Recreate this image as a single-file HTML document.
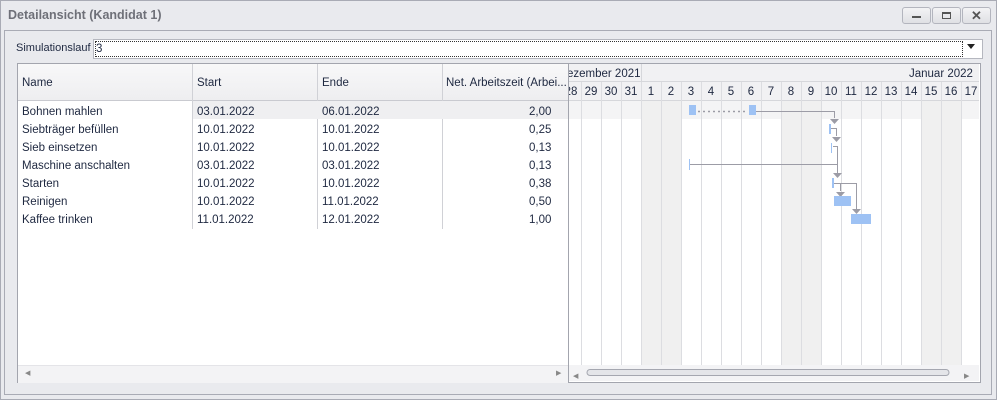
<!DOCTYPE html>
<html><head><meta charset="utf-8"><style>
body{margin:0;width:997px;height:400px;background:#e9eaee;font-family:"Liberation Sans",sans-serif;font-size:11.5px;color:#1e2840;position:relative;overflow:hidden}
.abs{position:absolute}
.win{left:0;top:0;width:995px;height:398px;border:1px solid #a9abb5}
.title{left:8px;top:8px;font-weight:bold;font-size:12.5px;color:#6e7078}
.btn{top:7px;width:27px;height:15px;border:1px solid #b3b5be;border-radius:3px;background:linear-gradient(#f3f3f5,#dfe0e4)}
.panel{left:4px;top:30px;width:986px;height:363px;border:1px solid #a9abb5;background:#e9eaee}
.grid{left:17px;top:63px;width:962px;height:318px;border:1px solid #a3a5ae;background:#fff}
.hdr{background:linear-gradient(#f8f8f9,#eeeef0);border-bottom:1px solid #c9cad0}
.c{position:absolute;white-space:nowrap}
</style></head><body>
<div class="abs win"></div>
<div class="abs title">Detailansicht (Kandidat 1)</div>
<div class="abs btn" style="left:902px"><div class="abs" style="left:9px;top:8px;width:9px;height:2px;background:#555"></div></div>
<div class="abs btn" style="left:932px"><div class="abs" style="left:9px;top:4px;width:7px;height:4px;border:1px solid #555;border-top-width:2px"></div></div>
<div class="abs btn" style="left:962px;font-size:13px;font-weight:bold;color:#555;text-align:center;line-height:15px">✕</div>
<div class="abs panel"></div>
<div class="abs" style="left:16px;top:42px;font-size:11px">Simulationslauf</div>
<div class="abs" style="left:93px;top:39px;width:888px;height:18px;background:#fff;border:1px solid #b5b7bf"></div>
<div class="abs" style="left:95px;top:41px;width:866px;height:14px;border:1px dotted #333;line-height:14px">3</div>
<div class="abs" style="left:967px;top:44px;width:0;height:0;border-left:4px solid transparent;border-right:4px solid transparent;border-top:5px solid #222"></div>
<div class="abs grid">
 <div class="abs hdr" style="left:0;top:0;width:550px;height:36px"></div>
 <div class="c" style="left:4px;top:13px">Name</div>
 <div class="c" style="left:179px;top:13px">Start</div>
 <div class="c" style="left:304px;top:13px">Ende</div>
 <div class="c" style="left:428px;top:13px">Net. Arbeitszeit (Arbei...</div>
 <div class="abs" style="left:174px;top:0;width:1px;height:165px;background:#d0d1d6"></div>
 <div class="abs" style="left:299px;top:0;width:1px;height:165px;background:#d0d1d6"></div>
 <div class="abs" style="left:424px;top:0;width:1px;height:165px;background:#d0d1d6"></div>
 <div class="abs" style="left:175px;top:37px;width:375px;height:18px;background:#efeff1"></div>
 <div class="abs" style="left:0;top:301px;width:550px;height:17px;background:#f3f3f5;border-top:1px solid #e4e4e8"></div>
 <div class="c" style="left:7px;top:305px;font-size:7px;color:#888">◀</div>
 <div class="c" style="left:538px;top:305px;font-size:7px;color:#888">▶</div>
 <div class="abs" style="left:550px;top:0;width:1px;height:318px;background:#a3a5ae"></div>
 <div style="position:absolute;left:0;top:39px;line-height:18px">
  <div class="c" style="left:4px;top:0">Bohnen mahlen</div><div class="c" style="left:179px;top:0">03.01.2022</div><div class="c" style="left:304px;top:0">06.01.2022</div><div class="c" style="left:511px;top:0">2,00</div>
  <div class="c" style="left:4px;top:18px">Siebträger befüllen</div><div class="c" style="left:179px;top:18px">10.01.2022</div><div class="c" style="left:304px;top:18px">10.01.2022</div><div class="c" style="left:511px;top:18px">0,25</div>
  <div class="c" style="left:4px;top:36px">Sieb einsetzen</div><div class="c" style="left:179px;top:36px">10.01.2022</div><div class="c" style="left:304px;top:36px">10.01.2022</div><div class="c" style="left:511px;top:36px">0,13</div>
  <div class="c" style="left:4px;top:54px">Maschine anschalten</div><div class="c" style="left:179px;top:54px">03.01.2022</div><div class="c" style="left:304px;top:54px">03.01.2022</div><div class="c" style="left:511px;top:54px">0,13</div>
  <div class="c" style="left:4px;top:72px">Starten</div><div class="c" style="left:179px;top:72px">10.01.2022</div><div class="c" style="left:304px;top:72px">10.01.2022</div><div class="c" style="left:511px;top:72px">0,38</div>
  <div class="c" style="left:4px;top:90px">Reinigen</div><div class="c" style="left:179px;top:90px">10.01.2022</div><div class="c" style="left:304px;top:90px">11.01.2022</div><div class="c" style="left:511px;top:90px">0,50</div>
  <div class="c" style="left:4px;top:108px">Kaffee trinken</div><div class="c" style="left:179px;top:108px">11.01.2022</div><div class="c" style="left:304px;top:108px">12.01.2022</div><div class="c" style="left:511px;top:108px">1,00</div>
 </div>
</div>
<svg class="abs" style="left:0;top:0" width="997" height="400" font-family="Liberation Sans,sans-serif" font-size="11.5" fill="#1e2840">
 <defs><clipPath id="cp"><rect x="569" y="64" width="410" height="317"/></clipPath></defs>
 <g clip-path="url(#cp)">
  <rect x="561" y="64" width="420" height="36" fill="#f1f1f3"/>
  <rect x="561" y="101" width="420" height="18" fill="#f4f4f5"/>
  <rect x="641" y="101" width="40" height="264" fill="#f0f0f0"/>
  <rect x="781" y="101" width="40" height="264" fill="#f0f0f0"/>
  <rect x="921" y="101" width="40" height="264" fill="#f0f0f0"/>
  <g stroke="#d6d7db">
   <line x1="561" y1="81.5" x2="981" y2="81.5"/><line x1="561" y1="100.5" x2="981" y2="100.5"/>
   <line x1="641.5" y1="64" x2="641.5" y2="81"/>
  </g>
  <g stroke="#dcdde1">
   <line x1="581.5" y1="82" x2="581.5" y2="365"/><line x1="601.5" y1="82" x2="601.5" y2="365"/><line x1="621.5" y1="82" x2="621.5" y2="365"/><line x1="641.5" y1="82" x2="641.5" y2="365"/><line x1="661.5" y1="82" x2="661.5" y2="365"/><line x1="681.5" y1="82" x2="681.5" y2="365"/><line x1="701.5" y1="82" x2="701.5" y2="365"/><line x1="721.5" y1="82" x2="721.5" y2="365"/><line x1="741.5" y1="82" x2="741.5" y2="365"/><line x1="761.5" y1="82" x2="761.5" y2="365"/><line x1="781.5" y1="82" x2="781.5" y2="365"/><line x1="801.5" y1="82" x2="801.5" y2="365"/><line x1="821.5" y1="82" x2="821.5" y2="365"/><line x1="841.5" y1="82" x2="841.5" y2="365"/><line x1="861.5" y1="82" x2="861.5" y2="365"/><line x1="881.5" y1="82" x2="881.5" y2="365"/><line x1="901.5" y1="82" x2="901.5" y2="365"/><line x1="921.5" y1="82" x2="921.5" y2="365"/><line x1="941.5" y1="82" x2="941.5" y2="365"/><line x1="961.5" y1="82" x2="961.5" y2="365"/>
  </g>
  <text x="567" y="77">ezember 2021</text>
  <text x="909" y="77">Januar 2022</text>
  <g text-anchor="middle">
   <text x="571" y="95">28</text><text x="591" y="95">29</text><text x="611" y="95">30</text><text x="631" y="95">31</text><text x="651" y="95">1</text><text x="671" y="95">2</text><text x="691" y="95">3</text><text x="711" y="95">4</text><text x="731" y="95">5</text><text x="751" y="95">6</text><text x="771" y="95">7</text><text x="791" y="95">8</text><text x="811" y="95">9</text><text x="831" y="95">10</text><text x="851" y="95">11</text><text x="871" y="95">12</text><text x="891" y="95">13</text><text x="911" y="95">14</text><text x="931" y="95">15</text><text x="951" y="95">16</text><text x="971" y="95">17</text>
  </g>
  <g stroke="#9c9ca6" fill="none">
   <line x1="698" y1="111.5" x2="748" y2="111.5" stroke-dasharray="2,3" stroke-width="1.5"/>
   <polyline points="756,111.5 834.5,111.5 834.5,118"/>
   <polyline points="831,128.5 836.5,128.5 836.5,136"/>
   <polyline points="833,146.5 837.5,146.5 837.5,173"/>
   <polyline points="689,164.5 837,164.5"/>
   <polyline points="834,183.5 856.5,183.5 856.5,209"/>
   <polyline points="840.5,183.5 840.5,191"/>
  </g>
  <g fill="#9c9ca6">
   <polygon points="830,119 839,119 834.5,124"/><polygon points="832,137 841,137 836.5,142"/><polygon points="833,173 842,173 837.5,178"/><polygon points="836,192 845,192 840.5,197"/><polygon points="852,209 861,209 856.5,214"/>
  </g>
  <g fill="#9ec2f4">
   <rect x="689" y="105" width="7" height="10"/><rect x="749" y="105" width="7" height="10"/>
   <rect x="829" y="124" width="2" height="10"/><rect x="831" y="143" width="1" height="10"/><rect x="689" y="159" width="1" height="11"/>
   <rect x="832" y="178" width="2" height="10"/><rect x="834" y="196" width="17" height="10"/><rect x="851" y="214" width="20" height="10"/>
  </g>
  <rect x="569" y="365" width="411" height="17" fill="#f3f3f5"/>
  <rect x="587" y="369.5" width="362" height="6" rx="3" fill="#e4e5e9" stroke="#a5a7b0"/>
 </g>
 <text x="573" y="378" font-size="7" fill="#888">◀</text>
 <text x="964" y="378" font-size="7" fill="#888">▶</text>
</svg>
</body></html>
